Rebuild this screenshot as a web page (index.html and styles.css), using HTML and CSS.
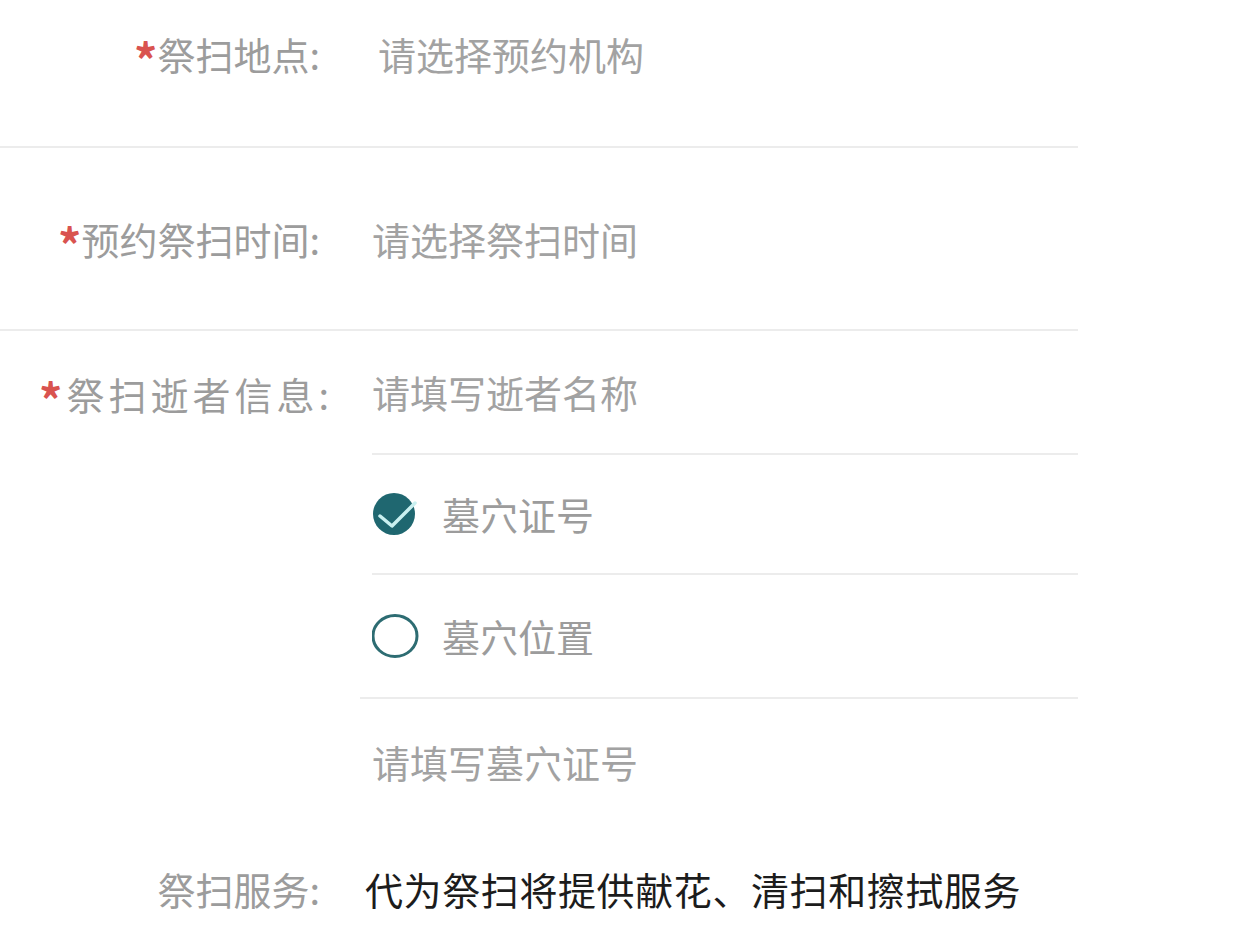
FILE: index.html
```html
<!DOCTYPE html>
<html lang="zh-CN">
<head>
    <meta charset="UTF-8">
    <meta name="viewport" content="width=device-width, initial-scale=1.0">
    <title>预约祭扫</title>
    <link rel="stylesheet" href="styles.css">
</head>
<body>
    <form class="form">
        <!-- 祭扫地点 -->
        <div class="row row-place">
            <label class="label"><span class="star">*</span>祭扫地点:</label>
            <div class="value placeholder value-place">请选择预约机构</div>
        </div>

        <!-- 预约时间 -->
        <div class="row row-time">
            <label class="label"><span class="star">*</span>预约祭扫时间:</label>
            <div class="value placeholder">请选择祭扫时间</div>
        </div>

        <!-- 逝者信息 -->
        <div class="row row-person">
            <label class="label label-wide"><span class="star">*</span>祭扫逝者信息:</label>
            <div class="sub-list">
                <div class="sub sub-name">
                    <span class="placeholder">请填写逝者名称</span>
                </div>
                <div class="sub sub-radio">
                    <svg class="radio" width="48" height="44" viewBox="0 0 48 44">
                        <circle cx="22" cy="22" r="21" fill="#1f6770"/>
                        <path d="M8 24 L20 34 L43 11" fill="none" stroke="#c9f0f0" stroke-width="3.5" stroke-linecap="round" stroke-linejoin="round"/>
                    </svg>
                    <span class="radio-text">墓穴证号</span>
                </div>
                <div class="sub sub-radio sub-last">
                    <svg class="radio" width="48" height="44" viewBox="0 0 48 44">
                        <ellipse cx="23" cy="22" rx="22" ry="20.5" fill="none" stroke="#2d6c72" stroke-width="3"/>
                    </svg>
                    <span class="radio-text">墓穴位置</span>
                </div>
                <div class="sub sub-cert">
                    <span class="placeholder">请填写墓穴证号</span>
                </div>
            </div>
        </div>

        <!-- 祭扫服务 -->
        <div class="row row-service">
            <label class="label label-service">祭扫服务:</label>
            <div class="value service-text">代为祭扫将提供献花、清扫和擦拭服务</div>
        </div>
    </form>
</body>
</html>
```

FILE: styles.css
```css
* {
    box-sizing: border-box;
}
body {
    margin: 0;
    padding: 0;
    background: #ffffff;
    font-family: "Noto Sans CJK SC", "Noto Sans", sans-serif;
    font-size: 38px;
    line-height: 38px;
    color: #9c9c9c;
}
.form {
    width: 1078px;
}
.row {
    display: flex;
    border-bottom: 2px solid #ececec;
}
.label {
    width: 372px;
    flex: none;
    padding-right: 52px;
    text-align: right;
    color: #9c9c9c;
    white-space: nowrap;
}
.label-wide {
    letter-spacing: 4px;
    padding-right: 39px;
}
.star {
    color: #d9534f;
    font-size: 46px;
    font-weight: bold;
    letter-spacing: 0;
    vertical-align: top;
    line-height: 46px;
    display: inline-block;
    height: 38px;
}
.label-wide .star {
    margin-right: 4px;
}
.value {
    padding-left: 0;
}
.placeholder {
    color: #a2a2a2;
}

/* first two rows */
.row-place {
    height: 148px;
    padding-top: 35px;
    align-items: flex-start;
}
.value-place {
    padding-left: 6px;
}
.row-time {
    height: 183px;
    align-items: center;
}

/* deceased info block */
.row-person {
    border-bottom: none;
    align-items: flex-start;
}
.row-person .label {
    padding-top: 44px;
}
.sub-list {
    flex: 1;
    display: flex;
    flex-direction: column;
}
.sub {
    display: flex;
    align-items: center;
    border-bottom: 2px solid #ececec;
}
.sub-name {
    height: 124px;
}
.sub-radio {
    height: 120px;
    gap: 22px;
}
.sub-radio.sub-last {
    height: 124px;
    margin-left: -12px;
    padding-left: 12px;
}
.radio {
    flex: none;
}
.radio-text {
    color: #9c9c9c;
}
.sub-cert {
    height: 126px;
    border-bottom: none;
}

/* service row */
.row-service {
    border-bottom: none;
    height: 128px;
    align-items: center;
}
.label-service {
    width: 365px;
    padding-right: 45px;
}
.service-text {
    color: #1c1c1c;
    letter-spacing: 0.6px;
}
```
